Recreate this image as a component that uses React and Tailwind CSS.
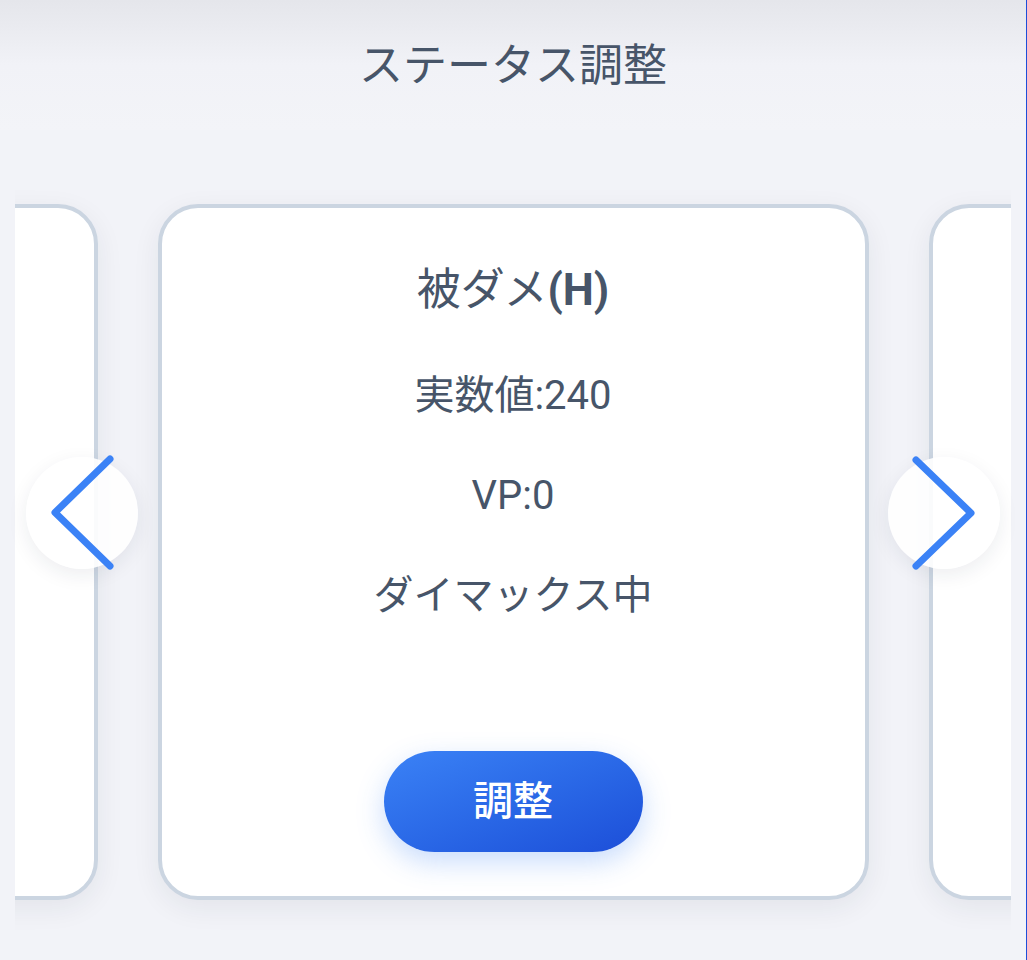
import { useState } from 'react'

const cards = [
  { name: '攻撃', key: '(A)', real: 150, vp: 0, dmax: false },
  { name: '被ダメ', key: '(H)', real: 240, vp: 0, dmax: true },
  { name: '防御', key: '(B)', real: 120, vp: 0, dmax: false },
]

function Chevron({ dir }) {
  const points = dir === 'left' ? '84,2 29,55.5 84,109' : '28,3 83,56 28,109'
  return (
    <svg width="112" height="112" viewBox="0 0 112 112" className="overflow-visible">
      <polyline
        points={points}
        fill="none"
        stroke="#3b82f6"
        strokeWidth="7"
        strokeLinecap="round"
        strokeLinejoin="round"
      />
    </svg>
  )
}

function StatCard({ card }) {
  return (
    <div className="shrink-0 w-[711px] h-[696px] rounded-[40px] border-4 border-[#cbd5e1] bg-white shadow-[0_8px_28px_rgba(30,41,59,0.07)] flex flex-col items-center text-[#475569]">
      <h2 className="mt-[56px] text-[44px] leading-[52px] font-normal">
        {card.name}
        <span className="font-bold">{card.key}</span>
      </h2>
      <p className="mt-[56px] text-[40px] leading-[48px]">実数値:{card.real}</p>
      <p className="mt-[52px] text-[40px] leading-[48px]">VP:{card.vp}</p>
      <p className="mt-[52px] text-[40px] leading-[48px]">{card.dmax ? 'ダイマックス中' : '通常'}</p>
      <button className="mt-auto mb-[44px] w-[259px] h-[101px] rounded-full bg-gradient-to-br from-[#3b82f6] to-[#1d4ed8] text-white text-[40px] font-medium shadow-[0_10px_28px_rgba(59,130,246,0.28)]">
        調整
      </button>
    </div>
  )
}

export default function App() {
  const [index] = useState(1)

  return (
    <div
      className="relative w-full min-h-[960px] bg-[#f2f3f8] border-r border-[#1d4ed8] overflow-hidden"
      style={{ fontFamily: 'Roboto, "Noto Sans CJK JP", sans-serif' }}
    >
      <header className="h-[130px] flex justify-center pt-[36px] bg-gradient-to-b from-[#e5e6eb] via-[#f1f2f7] to-[#f3f4f8]">
        <h1 className="text-[44px] leading-[60px] text-[#475569]">ステータス調整</h1>
      </header>

      <div className="mx-[15px] overflow-hidden pt-[74px] h-[830px]">
        <div className="flex justify-center gap-[60px]">
          {cards.map((c, i) => (
            <StatCard key={i} card={c} active={i === index} />
          ))}
        </div>
      </div>

      <button className="absolute left-[26px] top-[457px] w-[112px] h-[112px] rounded-full bg-white/90 shadow-[0_6px_20px_rgba(30,41,59,0.08)]">
        <Chevron dir="left" />
      </button>
      <button className="absolute right-[26px] top-[457px] w-[112px] h-[112px] rounded-full bg-white/90 shadow-[0_6px_20px_rgba(30,41,59,0.08)]">
        <Chevron dir="right" />
      </button>
    </div>
  )
}
